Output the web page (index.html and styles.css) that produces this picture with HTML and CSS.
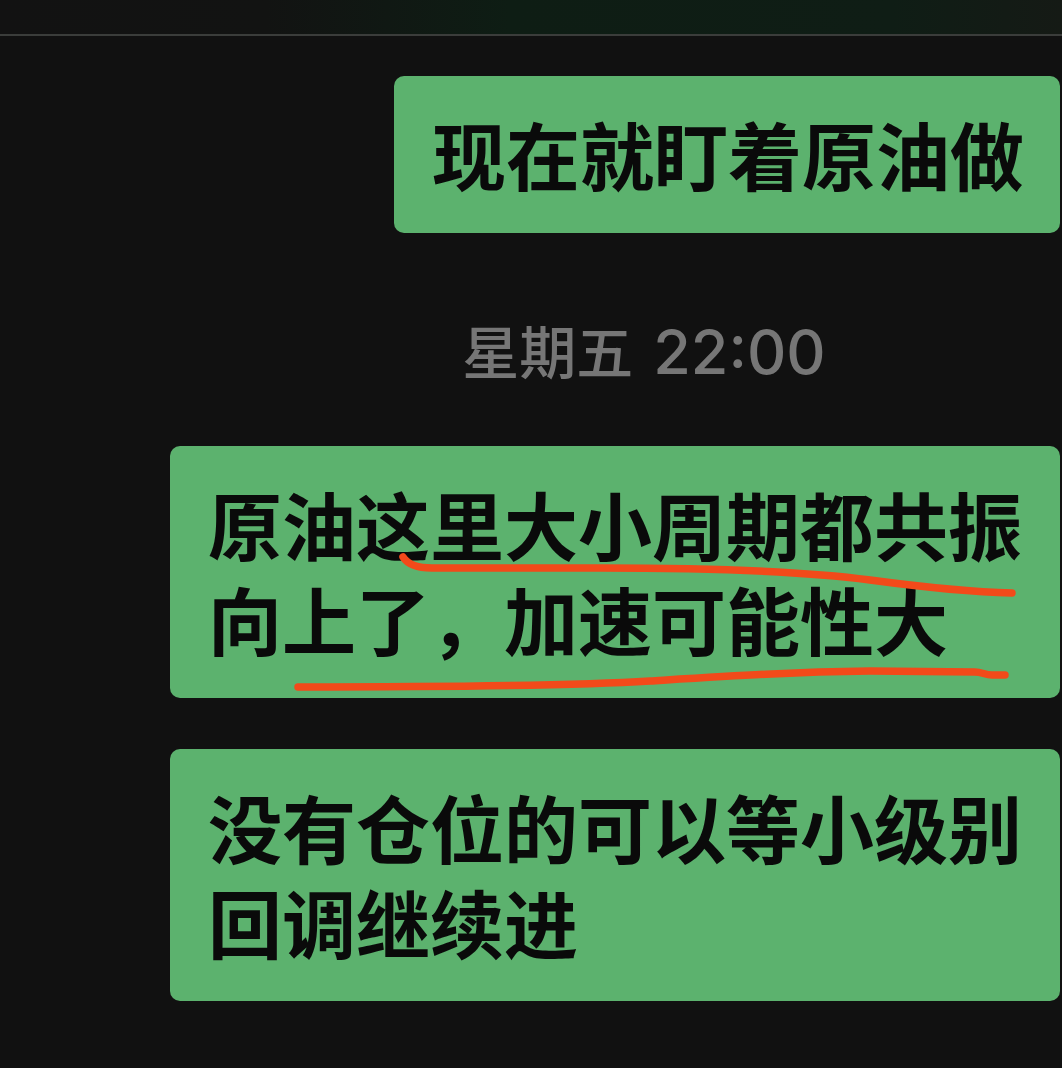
FILE: index.html
```html
<!DOCTYPE html>
<html lang="zh-CN">
<head>
    <meta charset="utf-8">
    <title>聊天记录</title>
    <link rel="stylesheet" href="styles.css">
</head>
<body>
    <div class="topbar"></div>

    <div class="chat">
        <div class="row">
            <div class="bubble">现在就盯着原油做</div>
        </div>

        <div class="time"><span class="day">星期五</span><span class="clock">22:00</span></div>

        <div class="row">
            <div class="bubble marked">原油这里大小周期都共振向上了，加速可能性大
                <svg class="marks" width="890" height="252" viewBox="0 0 890 252">
                    <path d="M233 111 Q240 122 262 122 L430 122 C560 122 640 126 700 134 C760 142 800 146 842 147"/>
                    <path d="M128 241 C260 241 400 240 480 235 C560 230 620 226 700 225 L805 226 C812 226 815 229 822 229 L835 229"/>
                </svg>
            </div>
        </div>

        <div class="row">
            <div class="bubble">没有仓位的可以等小级别回调继续进</div>
        </div>
    </div>
</body>
</html>
```

FILE: styles.css
```css
body {
    margin: 0;
    background: #111111;
    font-family: "Noto Sans CJK SC", "Noto Sans", sans-serif;
    height: 1068px;
    overflow: hidden;
}
.topbar {
    height: 34px;
    background: linear-gradient(90deg, #121212 0%, #121312 25%, #0e1d14 48%, #0f1d15 84%, #151a15 100%);
    border-bottom: 2px solid #3b3d3b;
}
.chat {
    padding: 40px 2px 0 0;
}
.row {
    display: flex;
    justify-content: flex-end;
}
.bubble {
    max-width: 890px;
    box-sizing: border-box;
    background: #5cb26e;
    color: #0a0a0a;
    border-radius: 10px;
    padding: 29px 36px 33px 38px;
    font-size: 74px;
    font-weight: 700;
    line-height: 95px;
    position: relative;
}
.row + .row {
    margin-top: 51px;
}
.time {
    margin: 76px 0 57px;
    padding-left: 228px;
    text-align: center;
    color: #767676;
    line-height: 80px;
    height: 80px;
}
.time .day {
    font-size: 57px;
    font-weight: 500;
}
.time .clock {
    margin-left: 20px;
    font-family: Inter, "Noto Sans", sans-serif;
    font-size: 61px;
    font-weight: 500;
}
.marks {
    position: absolute;
    left: 0;
    top: 0;
    overflow: visible;
}
.marks path {
    fill: none;
    stroke: #f24a1a;
    stroke-width: 7.5;
    stroke-linecap: round;
    stroke-linejoin: round;
}
```
